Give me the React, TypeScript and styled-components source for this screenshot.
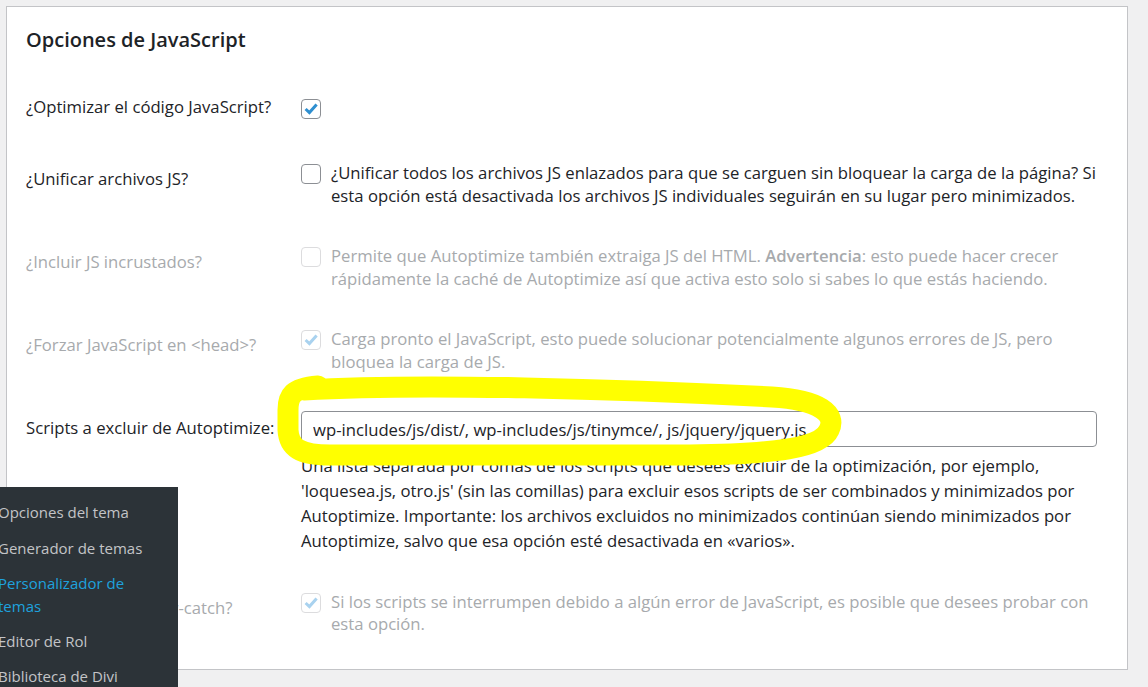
import styled, { createGlobalStyle } from "styled-components"

const GlobalStyle = createGlobalStyle`
  html, body {
    margin: 0;
    padding: 0;
    background: #f0f0f1;
  }
  body {
    font-family: "Open Sans", "Noto Sans", sans-serif;
    color: #1d2327;
    overflow: hidden;
  }
`

type CheckProps = { checked?: boolean; disabled?: boolean }

const Check = ({ checked, disabled }: CheckProps) => (
  <Box $disabled={disabled}>
    {checked && (
      <svg width="20" height="20" viewBox="0 0 20 20">
        <polyline
          points="4.6,10 8.4,13.6 15.6,5.4"
          fill="none"
          stroke={disabled ? "#a9d2ef" : "#2f8fd0"}
          strokeWidth="3"
        />
      </svg>
    )}
  </Box>
)

const menuItems = [
  { label: "Opciones del tema" },
  { label: "Generador de temas" },
  { label: "Personalizador de temas", current: true },
  { label: "Editor de Rol" },
  { label: "Biblioteca de Divi" },
]

export default function App() {
  return (
    <Page>
      <GlobalStyle />
      <Panel>
        <Title>Opciones de JavaScript</Title>

        <Row>
          <Label>¿Optimizar el código JavaScript?</Label>
          <Field>
            <LoneCheck>
              <Check checked />
            </LoneCheck>
          </Field>
        </Row>

        <Row>
          <Label>¿Unificar archivos JS?</Label>
          <Field>
            <Option>
              <Check />
              <span>
                ¿Unificar todos los archivos JS enlazados para que se carguen sin bloquear la carga de la página? Si
                <br />
                esta opción está desactivada los archivos JS individuales seguirán en su lugar pero minimizados.
              </span>
            </Option>
          </Field>
        </Row>

        <Row>
          <Label $disabled>¿Incluir JS incrustados?</Label>
          <Field>
            <Option $disabled>
              <Check disabled />
              <span>
                Permite que Autoptimize también extraiga JS del HTML. <b>Advertencia</b>: esto puede hacer crecer
                <br />
                rápidamente la caché de Autoptimize así que activa esto solo si sabes lo que estás haciendo.
              </span>
            </Option>
          </Field>
        </Row>

        <Row>
          <Label $disabled>¿Forzar JavaScript en &lt;head&gt;?</Label>
          <Field>
            <Option $disabled>
              <Check checked disabled />
              <span>
                Carga pronto el JavaScript, esto puede solucionar potencialmente algunos errores de JS, pero
                <br />
                bloquea la carga de JS.
              </span>
            </Option>
          </Field>
        </Row>

        <Row>
          <Label>Scripts a excluir de Autoptimize:</Label>
          <Field>
            <TextInput
              type="text"
              readOnly
              value="wp-includes/js/dist/, wp-includes/js/tinymce/, js/jquery/jquery.js"
            />
            <Description>
              Una lista separada por comas de los scripts que desees excluir de la optimización, por ejemplo,
              <br />
              'loquesea.js, otro.js' (sin las comillas) para excluir esos scripts de ser combinados y minimizados por
              <br />
              Autoptimize. Importante: los archivos excluidos no minimizados continúan siendo minimizados por
              <br />
              Autoptimize, salvo que esa opción esté desactivada en «varios».
            </Description>
          </Field>
        </Row>

        <Row>
          <Label $disabled>¿Usar envoltorio try-catch?</Label>
          <Field>
            <Option $disabled>
              <Check checked disabled />
              <span>
                Si los scripts se interrumpen debido a algún error de JavaScript, es posible que desees probar con
                <br />
                esta opción.
              </span>
            </Option>
          </Field>
        </Row>
      </Panel>

      <Highlight viewBox="260 360 600 115" width="600" height="115">
        <path
          d="M 304 390 C 420 383, 620 389, 772 397 C 820 400, 837 414, 829 430 C 821 448, 775 454, 690 455 L 330 455 C 300 455, 289 448, 288 430 L 288 410 C 288 396, 292 388, 318 386"
          fill="none"
          stroke="#ffff00"
          strokeWidth="21"
          strokeLinecap="round"
          strokeLinejoin="round"
        />
      </Highlight>

      <Flyout>
        {menuItems.map((item) => (
          <MenuItem key={item.label} $current={item.current}>
            {item.label}
          </MenuItem>
        ))}
      </Flyout>
    </Page>
  )
}

const Page = styled.div`
  position: relative;
  height: 687px;
  padding: 6px 20px 0 6px;
  box-sizing: border-box;
  overflow: hidden;
`

const Panel = styled.section`
  height: 664px;
  box-sizing: border-box;
  background: #fff;
  border: 1px solid #c3c4c7;
  padding: 21px 19px 0 19px;
`

const Title = styled.h2`
  margin: 0 0 18.6px;
  font-size: 20px;
  font-weight: 600;
  line-height: 24px;
  color: #1d2327;
`

const Row = styled.div`
  display: grid;
  grid-template-columns: 275px 1fr;
  font-size: 16.7px;
`

const Label = styled.div<{ $disabled?: boolean }>`
  padding: 25px 0;
  line-height: 22.75px;
  color: ${(p) => (p.$disabled ? "#a7aaad" : "#1d2327")};
`

const Field = styled.div`
  padding: 18.75px 11px 18.75px 0;
  line-height: 22.75px;
`

const LoneCheck = styled.div`
  padding-top: 7.6px;
`

const Option = styled.label<{ $disabled?: boolean }>`
  display: flex;
  align-items: flex-start;
  gap: 10px;
  margin-right: -11px;
  white-space: nowrap;
  color: ${(p) => (p.$disabled ? "#a7aaad" : "#1d2327")};

  b {
    font-weight: 600;
  }
`

const Box = styled.span<{ $disabled?: boolean }>`
  flex: none;
  display: block;
  width: 20px;
  height: 20px;
  margin-top: 2px;
  box-sizing: border-box;
  border: 1px solid ${(p) => (p.$disabled ? "#dcdcde" : "#8c8f94")};
  border-radius: 4px;
  background: #fff;
  overflow: hidden;

  svg {
    display: block;
    margin: -1px;
  }
`

const TextInput = styled.input`
  display: block;
  width: 100%;
  height: 36px;
  box-sizing: border-box;
  margin: 0;
  padding: 0 11px;
  border: 1px solid #8c8f94;
  border-radius: 4px;
  background: #fff;
  font: inherit;
  font-size: 16.7px;
  color: #1d2327;
  outline: none;
`

const Description = styled.p`
  margin: 6px -11px 0 0;
  line-height: 25px;
  white-space: nowrap;
  color: #1d2327;
`

const Highlight = styled.svg`
  position: absolute;
  left: 260px;
  top: 360px;
  pointer-events: none;
`

const Flyout = styled.nav`
  position: absolute;
  left: -17px;
  top: 487px;
  width: 195px;
  height: 220px;
  box-sizing: border-box;
  padding-top: 8px;
  background: #2c3338;
`

const MenuItem = styled.div<{ $current?: boolean }>`
  padding: 6.25px 15px;
  font-size: 15px;
  line-height: 22.75px;
  color: ${(p) => (p.$current ? "#1ea2de" : "#c3c4c7")};
`
